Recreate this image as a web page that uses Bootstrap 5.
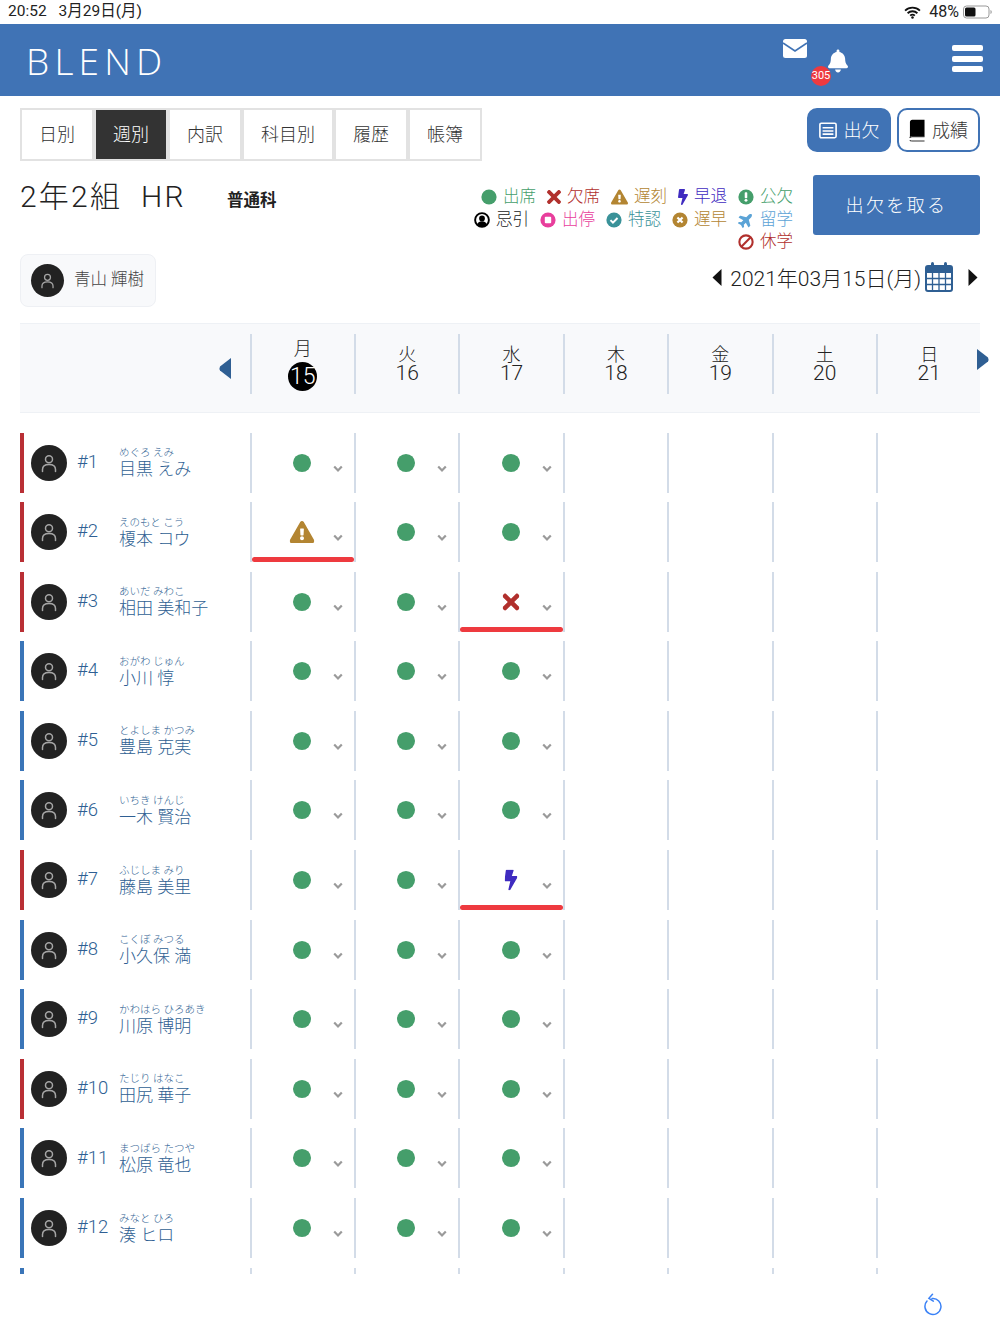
<!DOCTYPE html>
<html lang="ja">
<head>
    <meta charset="UTF-8">
    <meta name="viewport" content="width=device-width, initial-scale=1.0">
    <title>BLEND 出欠</title>
    <link href="https://cdn.jsdelivr.net/npm/bootstrap@5.3.0/dist/css/bootstrap.min.css" rel="stylesheet">
    <style>
        body {
            font-family: Roboto, "Noto Sans CJK JP", sans-serif;
            font-weight: 300;
            background-color: #fff;
            color: #222;
            height: 1334px;
            overflow: hidden;
        }
        .status-line { height: 24px; padding: 0 8px; font-size: 15.5px; font-weight: 400; }
        .status-pct { font-size: 16px; }
        .status-date { margin-left: 12px; }
        .app-bar { height: 72px; background-color: #4073b5; padding: 0 17px 0 26px; }
        .logo-text { color: #fff; font-family: "Open Sans", sans-serif; font-weight: 300; font-size: 37px; letter-spacing: 5.2px; line-height: 1; margin-top: 18px; }
        .mail-icon { margin: 15px -1px 0 1px; }
        .bell-wrap { position: relative; width: 20px; height: 24px; margin: 24px 0 0 22px; }
        .bell-count { position: absolute; left: -17px; top: 18px; width: 20px; height: 20px; padding: 0; line-height: 20px; font-size: 11px; font-weight: 400; background-color: #ee3a3f; color: #fff; border-radius: 50%; text-align: center; }
        .burger { width: 31px; margin: 21px 0 0 104px; }
        .burger span { display: block; height: 6px; background: #fff; border-radius: 2px; margin-bottom: 4.5px; }
        .page-wrap { padding: 12px 20px 0 20px; }
        .tab-btn { border: 2px solid #e2e2e2; border-radius: 0; height: 53px; padding: 0 17px; font-size: 18px; font-weight: 300; color: #333; background: #fff; line-height: 49px; white-space: nowrap; }
        .tab-btn.on { background: #333; color: #fff; border-color: #e2e2e2; }
        .side-btns { gap: 6px; }
        .side-btn { height: 44px; width: 84px; padding: 0; border: 2px solid #4073b5; border-radius: 10px; font-size: 18px; font-weight: 300; display: flex; align-items: center; justify-content: center; gap: 7px; }
        .side-btn.fill { background: #4073b5; color: #fff; }
        .side-btn.line { background: #fff; color: #333; width: 83px; }
        .info-line { margin-top: 14px; }
        .class-title { font-size: 30px; line-height: 44px; letter-spacing: 2.2px; margin: 0; width: 207px; font-weight: 300; white-space: nowrap; }
        .course-name { font-size: 16.5px; font-weight: 700; line-height: 52px; width: 246px; white-space: nowrap; }
        .legend-box { width: 320px; margin-top: 11px; font-size: 16.5px; line-height: 22.5px; }
        .legend-item { display: flex; align-items: center; gap: 6px; margin-left: 11px; white-space: nowrap; flex: none; }
        .legend-item svg { width: 16px; height: 16px; flex: none; }
        .legend-item svg.glyph-i-bolt { width: 10px; }
        .legend-item svg.glyph-i-warn { width: 17px; }
        .legend-item svg.glyph-i-x { width: 14px; }
        .take-btn { width: 167px; height: 60px; margin-left: 20px; background: #4073b5; color: #fff; border: 0; border-radius: 3px; font-size: 18px; letter-spacing: 2.4px; font-weight: 300; }
        .who-chip { width: 136px; height: 53px; background: #f8f9fb; border: 1px solid #eef0f4; border-radius: 8px; padding: 0 10px; gap: 10px; font-size: 16.5px; color: #444; white-space: nowrap; }
        .face { width: 36px; height: 36px; border-radius: 50%; background: #222; flex: none; display: flex; align-items: center; justify-content: center; }
        .who-chip .face { width: 33px; height: 33px; }
        .date-line { font-size: 21px; color: #222; white-space: nowrap; }
        .date-line svg { margin-bottom: 6px; }
        .date-next { margin: 0 2px 0 15px; }
        .day-band { position: relative; display: grid; grid-template-columns: 229.6px repeat(7, 104.4px); height: 90px; margin-top: 16px; background: #f8f9fb; border-top: 1px solid #eef1f5; border-bottom: 1px solid #eef1f5; padding-top: 10px; }
        .band-first { display: flex; justify-content: end; align-items: center; height: 70px; padding-right: 19px; }
        .day-head { height: 60px; border-left: 2px solid #d3dce8; text-align: center; font-size: 18px; display: flex; flex-direction: column; align-items: center; justify-content: center; }
        .day-head span { line-height: 18px; }
        .day-head b { font-weight: 300; font-size: 21px; line-height: 18px; }
        .day-head.today { justify-content: flex-start; padding-top: 6px; }
        .day-head.today b { width: 29px; height: 29px; font-size: 23px; line-height: 29px; margin-top: 4px; border-radius: 50%; background: #000; color: #fff; }
        .band-next { position: absolute; right: -9px; top: 25px; }
        .row-list { height: 841px; margin-top: 20px; overflow: hidden; }
        .pupil-row { display: grid; grid-template-columns: 229.6px repeat(7, 104.4px); height: 60px; margin-bottom: 9.6px; }
        .pupil-info { display: flex; align-items: center; border-left: 4px solid #3a75b8; padding-left: 7px; color: #2f5f93; }
        .pupil-info.girl { border-left-color: #b92f35; }
        .pupil-no { width: 42px; margin-left: 10px; font-size: 18.5px; white-space: nowrap; }
        .pupil-kana { font-size: 10.5px; line-height: 12px; margin-top: 2px; white-space: nowrap; }
        .pupil-name { font-size: 17px; line-height: 21px; white-space: nowrap; }
        .mark-cell { position: relative; border-left: 2px solid #d3dce8; }
        .mark-cell.alert-cell::after { content: ""; position: absolute; left: 0; right: 0; bottom: 0; height: 5px; background: #ee3a3f; border-radius: 3px; }
        .mark-icon { position: absolute; left: 50%; top: 30px; transform: translate(-50%, -50%); margin-left: -1px; display: block; }
        .drop-arrow { position: absolute; right: 11px; top: 32px; }
        .reload-icon { position: absolute; left: 924px; top: 1293px; }
    </style>
</head>
<body>
    <svg width="0" height="0" class="position-absolute">
        <defs>
            <symbol id="i-dot" viewBox="0 0 20 20"><circle cx="10" cy="10" r="9.5" fill="#459e6b"/></symbol>
            <symbol id="i-x" viewBox="0 70 352 372"><path fill="#b1302d" d="M242.72 256l100.07-100.07c12.28-12.28 12.28-32.19 0-44.48l-22.24-22.24c-12.28-12.28-32.19-12.28-44.48 0L176 189.28 75.93 89.21c-12.28-12.28-32.19-12.28-44.48 0L9.21 111.45c-12.28 12.28-12.28 32.19 0 44.48L109.28 256 9.21 356.07c-12.28 12.28-12.28 32.19 0 44.48l22.24 22.24c12.28 12.28 32.2 12.28 44.48 0L176 322.72l100.07 100.07c12.28 12.28 32.2 12.28 44.48 0l22.24-22.24c12.28-12.28 12.28-32.19 0-44.48L242.72 256z"/></symbol>
            <symbol id="i-warn" viewBox="0 0 576 512"><path fill="#b38532" d="M569.517 440.013C587.975 472.007 564.806 512 527.94 512H48.054c-36.937 0-59.999-40.055-41.577-71.987L246.423 24.035c18.467-32.009 64.72-31.951 83.154 0l239.94 415.978zM288 354c-25.405 0-46 20.595-46 46s20.595 46 46 46 46-20.595 46-46-20.595-46-46-46zm-43.673-165.346l7.418 136c.347 6.364 5.609 11.346 11.982 11.346h48.546c6.373 0 11.635-4.982 11.982-11.346l7.418-136c.375-6.874-5.098-12.654-11.982-12.654h-63.383c-6.884 0-12.356 5.78-11.981 12.654z"/></symbol>
            <symbol id="i-bolt" viewBox="0 0 320 512"><path fill="#3f2bc0" d="M296 160H180.6l42.6-129.8C227.2 15 215.7 0 200 0H56C44 0 33.8 8.9 32.2 20.8l-32 240C-1.7 275.2 9.5 288 24 288h118.7L96.6 482.5c-3.6 15.2 8 29.5 23.3 29.5 8.4 0 16.4-4.4 20.8-12l176-304c9.3-15.9-2.2-36-20.7-36z"/></symbol>
            <symbol id="i-excl" viewBox="0 0 20 20"><circle cx="10" cy="10" r="9.5" fill="#459e6b"/><rect x="8.4" y="4" width="3.2" height="7.6" rx="1" fill="#fff"/><circle cx="10" cy="14.2" r="1.8" fill="#fff"/></symbol>
            <symbol id="i-user" viewBox="0 0 20 20"><circle cx="10" cy="10" r="8.6" fill="#fff" stroke="#000" stroke-width="2.4"/><circle cx="10" cy="8" r="3.6" fill="#000"/><path d="M3.8 15.5c1.2-2.6 3.4-3.8 6.2-3.8s5 1.2 6.2 3.8C14.6 17.4 12.4 18.3 10 18.3s-4.6-.9-6.2-2.8z" fill="#000"/></symbol>
            <symbol id="i-stop" viewBox="0 0 20 20"><circle cx="10" cy="10" r="9.5" fill="#e83e9c"/><rect x="6" y="6" width="8" height="8" rx="1.2" fill="#fff"/></symbol>
            <symbol id="i-check" viewBox="0 0 20 20"><circle cx="10" cy="10" r="9.5" fill="#3a9299"/><path d="M5.6 10.2l3.1 3.1 5.7-5.8" fill="none" stroke="#fff" stroke-width="2.5"/></symbol>
            <symbol id="i-xc" viewBox="0 0 20 20"><circle cx="10" cy="10" r="9.5" fill="#b38532"/><path d="M6.8 6.8l6.4 6.4m0-6.4l-6.4 6.4" fill="none" stroke="#fff" stroke-width="2.8"/></symbol>
            <symbol id="i-plane" viewBox="0 0 576 576"><path transform="rotate(-45 288 288) translate(0 32)" fill="#5ba3d6" d="M480 192H365.71L260.61 8.06A16.014 16.014 0 0 0 246.71 0h-65.5c-10.63 0-18.3 10.17-15.38 20.39L214.86 192H112l-43.2-57.6c-3.02-4.03-7.77-6.4-12.8-6.4H16.01C5.6 128-2.04 137.78.49 147.88L32 256 .49 364.12C-2.04 374.22 5.6 384 16.01 384H56c5.04 0 9.78-2.37 12.8-6.4L112 320h102.86l-49.03 171.6c-2.92 10.22 4.75 20.4 15.38 20.4h65.5c5.74 0 11.04-3.08 13.89-8.06L365.71 320H480c35.35 0 96-28.65 96-64s-60.65-64-96-64z"/></symbol>
            <symbol id="i-ban" viewBox="0 0 20 20"><circle cx="10" cy="10" r="8.3" fill="none" stroke="#b1302d" stroke-width="2.6"/><path d="M4.5 15.5l11-11" stroke="#b1302d" stroke-width="2.6"/></symbol>
            <symbol id="i-person" viewBox="0 0 20 20"><circle cx="10" cy="6.3" r="3.5" fill="none" stroke="#a5a5a5" stroke-width="1.5"/><path d="M3.5 18.5v-2c0-3 2.6-5 6.5-5s6.5 2 6.5 5v2" fill="none" stroke="#a5a5a5" stroke-width="1.5" stroke-linecap="round"/></symbol>
            <symbol id="i-drop" viewBox="0 0 10 8"><path d="M1.2 1.5L5 5.5l3.8-4" fill="none" stroke="#9a9a9a" stroke-width="2.2"/></symbol>
        </defs>
    </svg>

    <div class="status-line d-flex justify-content-between align-items-center">
        <div>20:52<span class="status-date">3月29日(月)</span></div>
        <div class="d-flex align-items-center gap-1">
            <svg width="17" height="13" viewBox="0 0 16 12"><path d="M1 4.2a10 10 0 0 1 14 0M3.4 6.7a6.6 6.6 0 0 1 9.200 0M5.8 9a3.200 3.200 0 0 1 4.400 0" fill="none" stroke="#111" stroke-width="1.7"/><circle cx="8" cy="10.7" r="1.2" fill="#111"/></svg>
            <span class="ms-1 status-pct">48%</span>
            <svg width="29" height="14" viewBox="0 0 29 14"><rect x=".5" y="1" width="25.5" height="12" rx="3" fill="none" stroke="#999"/><rect x="2" y="2.5" width="10.5" height="9" rx="1.5" fill="#111"/><path d="M27.5 5v4c.8-.3 1.2-1 1.2-2s-.4-1.700-1.200-2z" fill="#999"/></svg>
        </div>
    </div>

    <nav class="app-bar d-flex align-items-start justify-content-between">
        <div class="logo-text">BLEND</div>
        <div class="d-flex align-items-start">
            <svg class="mail-icon" width="24" height="19" viewBox="0 0 24 19"><rect width="24" height="19" rx="2.5" fill="#fff"/><path d="M0 4l12 8 12-8" fill="none" stroke="#4073b5" stroke-width="1.6"/></svg>
            <div class="bell-wrap">
                <svg width="20" height="24" viewBox="0 0 448 512"><path fill="#fff" d="M224 512c35.32 0 63.97-28.65 63.97-64H160.03c0 35.35 28.65 64 63.97 64zm215.39-149.71c-19.32-20.76-55.47-51.99-55.47-154.29 0-77.7-54.48-139.9-127.94-155.16V32c0-17.67-14.32-32-31.98-32s-31.98 14.33-31.98 32v20.84C118.56 68.1 64.08 130.3 64.08 208c0 102.3-36.15 133.53-55.47 154.29-6 6.45-8.66 14.16-8.61 21.71.11 16.4 12.98 32 32.1 32h383.8c19.12 0 32-15.6 32.1-32 .05-7.55-2.61-15.27-8.61-21.71z"/></svg>
                <span class="bell-count">305</span>
            </div>
            <div class="burger"><span></span><span></span><span></span></div>
        </div>
    </nav>

    <div class="page-wrap">
        <div class="d-flex justify-content-between align-items-start">
            <div class="d-flex">
                <button class="btn tab-btn">日別</button>
                <button class="btn tab-btn on">週別</button>
                <button class="btn tab-btn">内訳</button>
                <button class="btn tab-btn">科目別</button>
                <button class="btn tab-btn">履歴</button>
                <button class="btn tab-btn">帳簿</button>
            </div>
            <div class="d-flex side-btns">
                <button class="btn side-btn fill">
                    <svg width="18" height="17" viewBox="0 0 20 18"><rect x="1" y="1" width="18" height="16" rx="1.5" fill="none" stroke="#fff" stroke-width="1.8"/><path d="M4 6h12M4 9.5h12M4 13h12" stroke="#fff" stroke-width="1.8"/></svg>出欠
                </button>
                <button class="btn side-btn line">
                    <svg width="16" height="23" viewBox="0 0 17 23"><path d="M1 2.5C1 1.1 2 0 3.5 0H16.500v17.500H3.500C2 17.500 1 18 1 19.500z" fill="#000"/><path d="M1 19.500c0-1 1-1.500 2.500-1.500h13M1 21.500c0 .8 1 1.200 2.500 1.200h13" fill="none" stroke="#333" stroke-width="1.1"/></svg>成績
                </button>
            </div>
        </div>

        <div class="d-flex align-items-start info-line">
            <h1 class="class-title">2年2組&nbsp;&nbsp;HR</h1>
            <div class="course-name">普通科</div>
            <div class="legend-box" id="legendBox"></div>
            <button class="btn take-btn">出欠を取る</button>
        </div>

        <div class="d-flex justify-content-between align-items-center">
            <div class="who-chip d-flex align-items-center">
                <span class="face"><svg width="17" height="17"><use href="#i-person"/></svg></span>
                <span>青山 輝樹</span>
            </div>
            <div class="date-line d-flex align-items-center">
                <svg width="10" height="17" viewBox="0 0 10 17" class="me-2"><path d="M9.5 0v17L.5 8.5z" fill="#111"/></svg>
                <span>2021年03月15日(月)</span>
                <svg class="ms-1" width="28" height="30" viewBox="0 0 28 30"><rect x="1" y="4" width="26" height="25" rx="2" fill="#fff" stroke="#2f5f93" stroke-width="2"/><rect x="1" y="4" width="26" height="7" fill="#2f5f93"/><rect x="6" y="0" width="3" height="7" rx="1.5" fill="#2f5f93"/><rect x="19" y="0" width="3" height="7" rx="1.5" fill="#2f5f93"/><path d="M7.500 11v17M14 11v17M20.500 11v17M2 16.500h24M2 22.500h24" stroke="#2f5f93" stroke-width="1.3"/></svg>
                <svg class="date-next" width="10" height="17" viewBox="0 0 10 17"><path d="M.5 0v17l9-8.500z" fill="#111"/></svg>
            </div>
        </div>

        <div class="day-band" id="dayBand"></div>
        <div class="row-list" id="rowList"></div>
    </div>

    <svg class="reload-icon" width="20" height="24" viewBox="0 0 20 24"><path d="M8 5.500a8 8 0 1 1-5 2.600M8.500 1.200L4.900 5.300l4.400 2.900" fill="none" stroke="#3b82f6" stroke-width="1.5" stroke-linecap="round"/></svg>

    <script src="https://cdn.jsdelivr.net/npm/bootstrap@5.3.0/dist/js/bootstrap.bundle.min.js"></script>
    <script>
        // legend rows, each entry: icon, label, colour
        const legend = [
            [['i-dot', '出席', '#459e6b'], ['i-x', '欠席', '#b1302d'], ['i-warn', '遅刻', '#b38532'], ['i-bolt', '早退', '#3f2bc0'], ['i-excl', '公欠', '#459e6b']],
            [['i-user', '忌引', '#222'], ['i-stop', '出停', '#e83e9c'], ['i-check', '特認', '#3a9299'], ['i-xc', '遅早', '#b38532'], ['i-plane', '留学', '#5ba3d6']],
            [['i-ban', '休学', '#b1302d']]
        ];
        document.getElementById('legendBox').innerHTML = legend.map(line =>
            '<div class="d-flex justify-content-end">' + line.map(([icon, label, color]) =>
                `<div class="legend-item" style="color:${color}"><svg class="glyph-${icon}"><use href="#${icon}"/></svg><span>${label}</span></div>`
            ).join('') + '</div>'
        ).join('');

        // week header
        const days = [['月', 15], ['火', 16], ['水', 17], ['木', 18], ['金', 19], ['土', 20], ['日', 21]];
        let band = '<div class="band-first"><svg width="12" height="21" viewBox="0 0 12 21"><path d="M12 0v21L1 12.500q-1-2 0-4z" fill="#2f5f93"/></svg></div>';
        days.forEach((d, i) => {
            band += `<div class="day-head ${i === 0 ? 'today' : ''}"><span>${d[0]}</span><b>${d[1]}</b></div>`;
        });
        band += '<svg class="band-next" width="12" height="21" viewBox="0 0 12 21"><path d="M0 0v21l11-8.500q1-2 0-4z" fill="#2f5f93"/></svg>';
        document.getElementById('dayBand').innerHTML = band;

        // pupils: girl flag sets the bar colour, marks overrides a day's attendance
        const pupils = [
            { kana: 'めぐろ えみ', name: '目黒 えみ', girl: true },
            { kana: 'えのもと こう', name: '榎本 コウ', girl: true, marks: { 0: 'warn' } },
            { kana: 'あいだ みわこ', name: '相田 美和子', girl: true, marks: { 2: 'x' } },
            { kana: 'おがわ じゅん', name: '小川 惇' },
            { kana: 'とよしま かつみ', name: '豊島 克実' },
            { kana: 'いちき けんじ', name: '一木 賢治' },
            { kana: 'ふじしま みり', name: '藤島 美里', girl: true, marks: { 2: 'bolt' } },
            { kana: 'こくぼ みつる', name: '小久保 満' },
            { kana: 'かわはら ひろあき', name: '川原 博明' },
            { kana: 'たじり はなこ', name: '田尻 華子', girl: true },
            { kana: 'まつばら たつや', name: '松原 竜也' },
            { kana: 'みなと ひろ', name: '湊 ヒロ' },
            { kana: '', name: '' }
        ];
        const markSize = { dot: [19, 19], warn: [25, 22], x: [17, 18], bolt: [13, 21] };

        function renderCell(pupil, day) {
            if (day > 2 || !pupil.name) return '<div class="mark-cell"></div>';
            const mark = (pupil.marks && pupil.marks[day]) || 'dot';
            const size = markSize[mark];
            return `<div class="mark-cell ${mark !== 'dot' ? 'alert-cell' : ''}">
                <svg class="mark-icon" width="${size[0]}" height="${size[1]}"><use href="#i-${mark}"/></svg>
                <svg class="drop-arrow" width="10" height="8"><use href="#i-drop"/></svg>
            </div>`;
        }

        document.getElementById('rowList').innerHTML = pupils.map((p, idx) => {
            const info = p.name ? `<span class="face"><svg width="20" height="20"><use href="#i-person"/></svg></span>
                <span class="pupil-no">#${idx + 1}</span>
                <div><div class="pupil-kana">${p.kana}</div><div class="pupil-name">${p.name}</div></div>` : '';
            return `<div class="pupil-row"><div class="pupil-info ${p.girl ? 'girl' : ''}">${info}</div>${days.map((d, i) => renderCell(p, i)).join('')}</div>`;
        }).join('');
    </script>
</body>
</html>
